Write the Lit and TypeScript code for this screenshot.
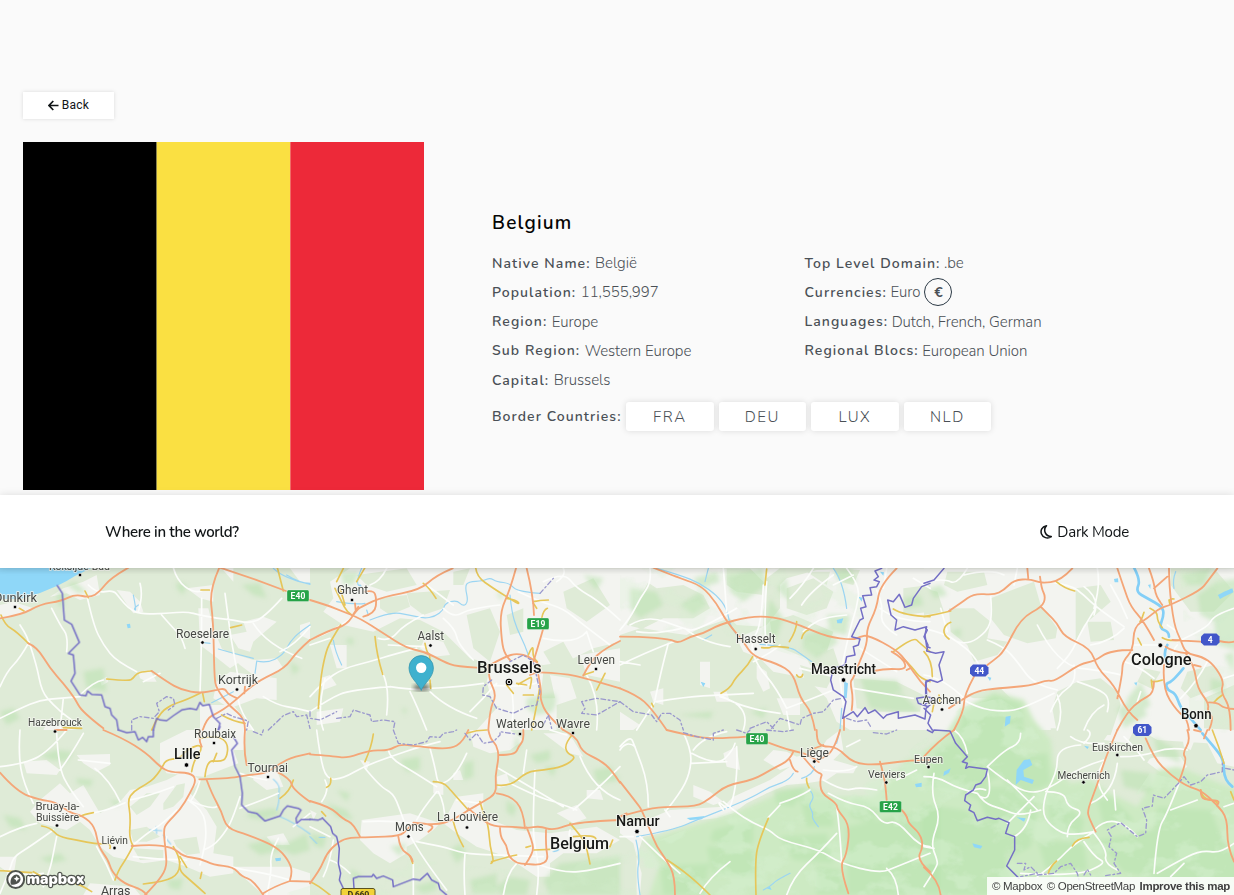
import { LitElement, html, svg, css } from "lit";
import { customElement } from "lit/decorators.js";

type Tile = { x: number; y: number; [layer: string]: any };

// Every tile holds its geometry in thirds of a pixel, measured from its own corner.
const TILES: Tile[] = [
  {
    x: 0, y: -3,
    light: [
      "150,95 190,70 250,50 290,30 300,90 240,105 200,85", "350,75 390,80 420,110 430,140 400,145 375,110",
      "560,70 640,60 640,110 600,100", "595,130 625,130 640,190 665,250 720,290 690,310 640,270 600,240",
      "730,170 790,155 830,170 760,230 750,260 715,250 690,210 740,200", "680,260 760,285 830,280 850,310 790,350 760,330 720,300",
      "650,350 690,320 830,340 830,405 770,400 690,430 640,400", "600,420 700,420 760,495 600,495", "300,345 320,335 325,350 305,362",
      "415,320 450,315 470,350 440,350 420,340", "0,120 40,110 100,130 60,150 0,160", "900,180 930,170 930,225 900,210", "665,10 700,10 700,50",
      "130,495 150,460 180,485 230,495", "870,10 930,10 930,60 900,50",
    ],
    forest: ["170,85 195,75 190,130 175,120", "725,60 780,55 800,100 760,90", "530,50 560,60 550,90 530,70", "250,320 310,310 320,380 260,370", "0,440 40,430 60,460 20,480", "870,290 900,310 880,330", "200,60 225,50 260,80 235,85"],
    water: ["0,8 276,8 225,33 200,48 172,62 120,84 60,102 0,102"],
    lakes: ["380,178 390,176 392,188 383,190"],
    streams: ["400,90 410,140 400,130 415,120", "612,233 630,235", "655,252 700,265 760,280", "770,288 800,295 850,270 870,230 900,200 930,180", "770,290 765,325", "635,413 700,380", "860,30 900,55 930,55", "820,10 850,40 930,58"],
    white: [
      "265,60 290,85 340,75 360,100 385,130 420,148 500,145 560,140 600,150 650,160 700,165 745,175 790,160 845,100", "262,98 280,180 310,240 350,290 410,320", "520,8 530,45 580,85 605,78",
      "485,150 520,190 545,215 555,250", "88,230 60,280 20,320 0,365", "90,240 110,300 125,380 160,420 200,455 230,475", "0,460 60,430 120,405 180,400 240,395", "155,130 180,180 205,215 200,260",
      "420,55 430,90 415,140", "605,100 605,260 600,385", "675,85 690,200 700,260 715,340", "60,180 90,225 85,240", "240,390 280,350 310,345", "760,175 800,240 905,280", "715,405 720,440 760,495", "790,395 830,420 890,430 930,440", "930,185 885,240 840,260", "430,350 480,325", "180,495 190,400",
    ],
    yellow: ["3,150 15,180 50,200 85,235", "58,130 72,138", "255,78 265,98", "832,8 850,78", "603,75 628,75", "692,188 725,180", "320,342 385,348 400,340 410,325 430,320 455,318", "600,385 560,405 510,420 475,450 455,495", "608,385 613,410", "665,450 700,470 735,475", "190,488 245,490"],
    orange: ["0,160 65,150 120,118 185,108 225,88 270,98 300,80 330,40 385,8", "85,235 110,245 150,310 190,355 225,400 245,440 310,490", "658,8 628,75 640,170 643,340 650,372 690,425 735,460 735,495", "660,8 760,40 858,78", "930,225 890,260 855,310 780,345 735,380 690,420 650,445 620,460 608,495", "455,318 500,350 545,375 600,385 650,375 675,370 685,390 712,400", "735,365 733,385"],
    border: ["172,62 187,85 193,165 215,178 238,232 205,265 220,270 225,325 213,348 240,390 258,392 263,378 275,388 305,390 315,425 330,430 335,450 350,465 355,495", "460,495 470,460 480,465 500,467 520,452 545,435 570,430 590,434 600,412 608,422 628,418 640,455 660,475 655,495"],
    dash: ["395,495 395,465 420,455 460,460 478,440 470,415 500,395 520,400 525,420 505,435", "650,460 680,445 700,455 745,468 740,495", "805,495 850,452 880,440 890,455 920,450 930,490"],
  },
  {
    x: 0, y: 162,
    light: [
      "70,95 140,90 180,120 170,135 80,130", "230,75 330,72 330,105 290,125 250,100", "120,210 180,160 210,190 250,165 300,250 360,215 390,180 440,170 500,150 560,120 600,150 570,190 620,240 650,290 640,370 700,380 700,430 630,440 560,410 500,390 430,400 340,380 300,350 270,300 240,275 200,300 120,280 90,245",
      "480,40 560,0 740,0 730,60 700,60 715,100 610,140 500,130 480,100", "760,130 830,120 850,170 800,180 760,150", "690,410 870,410 930,430 930,495 790,495 740,450", "800,320 850,310 870,345 820,345", "0,380 50,380 40,440 0,410", "270,460 400,470 420,495 250,495",
    ],
    farm: ["490,220 530,165 555,160 550,200 520,230 490,240", "390,230 440,190 480,190 450,230 410,255", "520,330 590,320 600,370 560,375 530,350", "390,300 440,290 480,320 440,335 400,335", "400,355 490,360 490,385 420,390"],
    forest: ["120,75 170,60 220,65 200,95 150,90", "230,145 280,150 270,170 230,160", "750,245 820,235 850,250 790,270 740,260", "740,345 800,330 850,345 920,310 930,360 880,375 850,360 780,375", "10,255 60,265 80,300 30,290", "330,210 365,215 350,230", "120,385 180,370 200,390 150,400", "500,450 550,445 540,480 510,475"],
    streams: ["820,148 840,165 835,195 838,215 830,240", "840,260 880,275 930,312", "450,300 485,302", "468,290 470,310", "490,315 512,342"],
    lakes: ["825,385 843,383 842,392 828,394"],
    white: [
      "60,0 55,70 70,160 100,220", "170,10 175,110 210,180 250,230", "200,0 150,60 80,100 0,110", "250,10 210,80 180,120", "330,100 235,90", "285,115 330,150 360,215", "240,255 320,245 375,218", "0,320 60,290 110,280", "160,300 90,350 40,380 30,420 0,490", "170,320 160,370 150,420 130,470", "290,350 320,400 340,450", "400,345 440,310 490,280 530,240", "570,215 610,240 620,310 610,370 600,405", "565,210 630,240 650,230", "720,200 700,260 680,300 640,350 610,360", "600,150 590,190 570,215", "720,130 760,145 800,150", "835,190 790,210 720,235", "835,325 810,370 815,430 800,495", "690,410 730,420 800,430 870,450", "880,290 930,250", "390,210 440,200 520,170", "0,420 80,440 130,430", "400,380 480,390 560,390", "500,320 495,355",
    ],
    yellow: ["490,105 470,140 435,165 400,185 383,210 392,260 387,330 400,348", "490,105 495,90 540,85 555,65 580,50 600,45 605,60 580,95 575,125", "615,140 620,90 660,95 680,85 685,40 650,15 600,25", "640,95 650,70", "125,288 150,292 175,320 230,330 290,343 335,340 330,355", "235,260 255,252 280,248", "398,350 380,385 355,420 345,450", "0,422 95,428", "100,425 160,460 200,455 240,462 275,485", "520,350 540,380 538,430 495,455 430,462", "540,380 560,412", "540,395 535,420 570,450 615,490", "605,427 601,445", "880,150 870,185 840,205"],
    orange: ["0,128 50,185 120,210 165,215 210,248 250,258 285,290 295,350 325,390 335,425 370,460 430,480 440,495", "310,0 370,25 440,70 480,110 510,127 570,128 590,148 570,190 540,240 500,280 490,300 498,370 500,415 470,460 435,495", "598,148 680,146 745,135 800,130 840,100 880,80 930,70", "620,150 635,190 665,245 680,295 745,315 830,350 865,390 878,425 870,450", "395,348 450,343 520,352 550,380 600,385 640,405 700,410 725,440 760,450 790,495", "870,453 930,455", "830,125 870,145 880,180 930,215", "735,0 730,60 740,105", "870,453 820,470 790,490", "600,0 595,30 605,50", "165,0 200,0"],
    border: ["355,0 380,8 405,5 415,30 428,22 440,35 445,20 460,20 460,0", "655,0 660,-10", "700,20 712,40 695,60 705,110 720,140 727,190 725,225 745,245 770,250 795,273 840,258 850,240 862,228 895,235 903,240 888,265 890,280 905,268 930,268"],
    dash: ["760,5 785,15 790,0"],
  },
  {
    x: 310, y: -3,
    light: [
      "60,50 120,10 930,10 930,230 850,250 770,290 700,300 620,290 560,300 480,280 440,240 400,200 330,165 270,160 190,200 100,180 40,140 70,100",
      "345,220 400,230 420,270 370,275 330,250", "540,300 660,260 700,320 690,410 620,440 550,420 530,350", "620,400 740,400 740,495 500,495 560,430", "30,340 60,330 80,360 40,375", "60,240 110,240 110,310 80,310", "20,440 100,430 90,470 20,480", "720,330 780,340 800,400 740,420", "810,270 930,250 930,350 830,330",
    ],
    farm: ["140,30 290,10 320,60 230,80 170,60", "290,85 420,75 400,130 340,150 300,120", "470,150 540,130 570,200 540,290 490,250", "210,100 290,90 300,125 240,150 210,130", "590,150 640,130 640,200 600,210", "760,80 850,40 900,120 830,170 770,130", "700,260 760,230 800,300 730,310", "430,20 480,10 460,60 430,60"],
    forest: ["650,400 700,390 735,385 730,440 680,450 650,430", "720,410 740,395 735,430", "110,220 130,220 130,240 110,235", "560,80 580,90 570,105", "275,430 290,432 285,450", "820,30 880,40 860,75", "90,20 150,20 130,60 100,60"],
    streams: ["155,10 135,55 160,70 150,60", "80,110 140,120 165,115", "180,165 240,140 300,150 340,160 375,155 400,135 405,115 440,105 460,125 475,110 465,65 475,50 520,48 540,38 560,50 600,55 620,80 690,85", "600,90 605,140 620,190 645,240 655,270", "170,135 175,150", "70,225 75,260 95,300"],
    dash2: ["690,85 730,40"],
    white: [
      "205,220 240,230 280,180 340,150", "235,240 345,245", "130,155 70,200 10,220", "0,395 40,350 100,310 180,290 260,265 320,250", "0,440 60,400 120,375 240,365", "215,320 240,360 230,450", "240,365 310,375 360,370 450,365 520,355", "360,380 410,430 500,460", "400,160 435,190 445,240 490,285", "400,130 430,160 480,130 570,120", "430,120 390,90 350,60", "625,80 690,110 760,130 820,180 900,240", "700,50 760,20 800,70 870,110 930,165", "700,220 800,240 830,200", "760,10 770,30 740,50", "45,340 20,440 40,495", "560,355 520,400 480,440", "600,360 620,430 600,495", "540,360 640,370 690,350", "830,330 870,400 860,495", "300,380 320,420 350,495", "60,220 0,240", "180,60 210,50 230,10", "830,200 850,260",
    ],
    yellow: ["75,70 95,110 110,140 125,150", "90,70 105,120", "80,50 100,10", "165,8 140,50", "340,55 358,68 378,100", "497,8 500,35 550,70 585,92 630,120 620,105 590,100", "92,180 60,230 45,270 30,350 25,430", "195,215 200,270 218,328", "345,235 350,262 362,270 358,310", "360,345 362,370", "670,110 690,105 715,105", "695,160 700,135 712,130", "680,130 670,115", "655,270 670,235 668,280 682,290", "625,358 655,340 668,335 660,370", "620,355 650,360", "590,360 610,385", "640,390 670,390", "690,360 685,400 665,495", "820,330 850,320", "885,325 860,375"],
    orange: ["0,105 50,120 100,140 150,160 220,205 290,250 345,260 400,290 440,305 500,308", "0,225 60,195 110,180 140,135 160,122 220,95 330,75 380,30 428,10", "165,80 190,75 200,100 195,145 160,155", "618,10 600,75 570,140 575,230 585,270 600,285", "650,10 670,90 672,150", "700,190 680,260 670,290", "540,300 585,275 620,265 660,275 690,300 690,320 660,330", "535,300 535,340 560,390 540,430 535,495", "690,322 760,325 830,340 930,370", "820,332 840,290 885,250 930,228", "685,330 695,380 690,400 710,450 760,495", "130,148 145,125", "135,115 137,135"],
    border: [],
    dash: ["545,345 520,365 518,390 540,395 560,430 610,445 650,425 680,420 690,380 670,290 640,270 600,290", "80,460 120,455 130,435 180,450 185,470 220,465 255,470 250,495", "815,410 825,430 815,445 860,450 930,410 860,400 815,410", "700,480 715,450 725,490", "0,440 0,460 30,465 80,440"],
  },
  {
    x: 310, y: 162,
    light: ["480,0 560,0 600,0 640,30 600,60 540,70 490,50", "700,10 770,10 790,30 820,80 780,70", "370,160 400,160 400,195 370,190", "430,130 450,120 460,150 430,150", "440,200 520,190 520,260 620,300 720,310 860,290 930,330 860,370 760,370 720,400 720,440 680,440 620,400 560,370 500,350 440,310 400,280", "155,270 300,250 390,280 370,300 330,330 290,350 290,370 240,400 190,370 150,330", "560,140 590,130 600,165 565,175", "740,250 800,225 830,265 790,280", "150,90 180,95 170,120", "830,180 870,180 880,210 830,205", "0,240 20,250 10,270"],
    forest: ["270,90 330,80 330,120 290,125", "460,100 490,90 490,140 460,150", "80,180 120,190 110,215", "50,220 110,240 130,270 80,260", "590,210 620,230 610,260 590,245", "660,75 720,60 720,90 680,100", "700,110 740,110 730,140", "850,120 900,110 930,150 860,160", "120,415 160,440 130,450", "420,360 450,340 470,370 440,400", "310,470 380,450 380,480 340,490", "480,450 560,430 560,490 490,490", "750,400 930,380 930,495 720,495 700,450", "0,310 50,320 40,355 10,345", "560,470 600,440 660,450 650,495 570,495", "240,350 290,340 270,380", "620,10 630,50 610,60"],
    streams: ["730,365 755,360 740,355", "28,322 45,322", "0,320 20,340"],
    white: ["20,0 30,80 50,150 100,145 160,110 240,80 330,50 390,35", "45,150 60,180 35,215", "165,115 210,170 250,190 270,240 295,310 350,400 410,480", "235,60 240,85 310,125 380,170", "380,185 335,240 320,270", "385,185 405,220 405,280", "360,55 375,110 385,170 440,135 470,70", "640,130 650,60", "600,160 680,200 750,220 800,240", "675,120 670,230 670,330 690,420 680,495", "565,115 600,135 760,230", "930,110 850,190 790,240", "810,80 850,180 930,210", "320,335 400,350 460,370 540,375 700,380", "465,370 460,430 465,495", "310,400 310,495", "160,275 230,270 310,280", "70,330 60,400 40,440", "0,290 60,320", "690,405 760,430 850,420 930,400", "580,495 590,430 620,400", "120,430 90,400 60,390", "800,350 770,330 780,300", "440,210 510,220", "720,0 770,15"],
    yellow: ["190,12 185,50 165,95", "50,172 65,165 62,145", "35,245 47,258", "370,155 400,155 430,190 475,240", "430,275 440,315 460,350", "510,215 520,250 535,285 540,350 553,398 543,400", "545,395 600,378 620,375", "560,165 600,170 650,125 700,120 760,110 800,82 770,70 765,40 790,10", "780,280 815,320 830,350 840,402", "790,320 860,312 858,330", "900,350 908,330", "648,352 662,348", "672,360 720,358", "300,378 308,400", "0,455 20,462 60,495", "470,10 500,0 530,0"],
    orange: ["0,73 70,78 110,85 180,60 235,62 270,42 330,50 420,58 460,35 475,0", "535,0 540,25 560,45 567,80 555,140 560,190 520,215 475,240 430,270 380,285 310,278 290,300 270,318 180,322 120,322 85,335 50,370 30,420 0,460", "560,190 600,195 640,240 645,295", "475,235 510,265 550,290 610,290 650,295 690,288 730,302 800,275 930,270", "0,213 60,230 100,268 130,280 150,320", "310,278 350,280 375,292 355,305", "265,320 270,358 305,378 308,395", "570,292 570,320 590,345 595,378 620,400 650,402 690,405 715,390 707,350 708,300", "650,292 668,335 670,370 645,405", "640,0 642,30 625,50 615,75 568,75", "760,0 800,20 815,65 870,90 905,120 930,158"],
    border: ["0,268 25,270 38,265 62,290 68,310 80,320 88,355 85,400 92,430 88,450 100,475", "132,475 130,445 145,440 185,440 190,433 200,445 220,438 248,450 250,470 310,447 330,450 352,430 365,450 385,460 390,478 410,495"],
    dash: ["250,0 265,40 310,45 350,35 360,20 390,22 400,10 430,5 440,0", "465,10 480,30 500,10 520,40 550,35 570,15 570,5 615,12"],
  },
  {
    x: 620, y: -3,
    light: ["0,10 110,10 80,60 60,100 40,140 20,180 60,190 0,210", "50,30 110,10 480,10 440,40 440,80 430,140 430,185 350,180 330,160 240,190 200,210 130,200 70,190 130,160 220,160 270,130 250,90 190,60 110,70", "480,60 500,40 590,15 720,10 930,10 930,495 690,495 650,470 620,400 560,340 460,320 420,280 370,260 350,220 440,180 480,130", "90,380 130,370 130,420 100,410", "280,380 320,380 330,410 290,410", "470,400 540,400 540,450 490,450", "410,300 440,320 450,370 430,380 410,340", "240,290 270,290 270,370 240,360", "0,440 60,480 40,495 0,495"],
    farm: ["320,10 390,10 430,50 430,90 350,80 320,60", "500,70 580,40 640,80 620,130 560,150 500,130", "640,10 720,15 700,60 660,50", "450,170 520,150 640,200 620,260 560,280 460,240", "560,280 640,250 660,310 570,300", "700,340 830,350 910,390 900,440 780,440 710,430", "850,70 930,60 930,140 850,150", "540,300 640,330 620,370 560,360", "560,20 630,20 620,60"],
    forest: ["30,70 110,80 130,120 60,160 30,130", "180,120 240,80 260,120 220,150", "450,100 490,160 470,220 430,210", "320,30 430,10 440,60 370,110 330,80", "550,210 620,190 655,230 590,280 550,250", "620,150 690,150 680,210 630,200", "720,340 830,345 850,380 740,390", "850,100 900,90 910,120 860,130", "730,370 850,390 900,440 830,440 750,430", "220,40 290,20 300,50 240,70", "640,20 690,10 710,50 660,50", "470,70 500,40 510,110", "170,450 280,440 270,460", "390,440 440,430 430,460"],
    streams: ["110,10 180,30 240,55 290,90 320,130 330,180 350,210 360,225", "265,10 255,50", "420,238 510,245 540,265 575,290", "640,10 670,50 680,130", "250,225 275,210", "665,430 660,495", "675,350 678,390"],
    lakes: ["650,165 670,160 665,175 652,175", "242,350 256,355 250,366", "673,350 684,355 680,400 672,398", "780,20 792,22 790,32", "715,95 728,98 725,110"],
    white: ["90,10 95,50 60,100 30,160 0,195", "30,180 80,150 190,190 230,200 350,130", "185,190 100,210 50,200", "195,190 240,230 330,245", "0,300 70,265 160,230", "145,235 120,330 105,405", "110,410 200,395 300,390 400,385", "300,390 360,430 480,445", "105,410 50,495", "310,10 320,140", "440,50 430,200 440,240", "430,60 425,180 390,235 410,300 470,370 500,430", "500,430 580,400 640,375", "545,120 570,80 640,30", "550,200 570,180 620,155 680,150", "680,10 720,60 710,130 690,190 660,330", "770,75 790,120 780,180 830,210", "780,130 830,170 930,170", "640,60 700,30", "480,240 460,260 400,290", "540,310 640,335", "700,370 760,380 880,400", "720,250 800,300 830,320", "660,340 670,420", "370,495 395,420 300,395", "500,440 510,495", "800,10 790,70", "0,290 60,300", "880,40 930,70", "510,100 550,60 580,10"],
    yellow: ["440,12 435,60", "530,170 530,195 508,230", "565,195 550,200 545,220", "425,248 450,250 455,242 505,248", "398,275 385,300 345,340 330,370 303,385", "530,330 535,338 548,335 548,328", "820,132 850,152 930,155", "820,260 880,215 900,235 930,260", "850,280 880,310 900,340 930,350", "95,415 100,425"],
    orange: ["100,8 180,40 245,62 290,115 320,170 370,230 400,275 470,295 520,325 540,400 575,440 585,495", "0,215 60,215 150,222 175,235 210,215 250,205 300,178 385,155 460,155 540,180 620,215 700,225 720,215 745,210 830,255 860,290 900,350 930,380", "830,10 780,60 770,130 740,190 742,235 715,300 700,340 690,350 700,400 695,435", "815,260 850,280 860,315 800,310 760,318", "0,370 50,390 95,430 140,495", "860,315 870,310", "672,455 672,495"],
    border: ["785,10 765,18 775,35 762,45 778,50 770,65 750,68 755,90 728,92 738,125 722,130 730,160 720,165 695,215 720,222 715,240 700,245 705,270 680,275 675,300 640,310 632,345 640,375 670,395 678,410 668,460 700,440 712,455 735,428 745,445 765,435 790,460 800,450 835,440 835,460 885,450 915,462 918,430 930,420", "930,55 905,65 880,100 875,120 855,127 838,88 820,110 803,105 813,150 830,165 825,195 850,185 885,195 920,185 915,210 920,245 930,248", "930,345 918,348 920,395 890,400 895,415 925,425"],
    dash: ["0,410 40,440 95,450 110,470 125,445 150,445 180,465 190,495", "455,490 480,460 510,470 540,480 545,460 580,445 610,440 640,405 665,400", "680,460 710,470 740,465 755,490", "390,490 440,470 460,490"],
  },
  {
    x: 620, y: 162,
    light: ["430,90 460,60 500,65 530,80 600,60 620,30 660,0 670,60 640,90 710,110 700,130 650,130 620,150 560,160 500,165 440,190 380,220 340,250 290,265 240,270 120,310 70,320 50,380 40,340 0,310 0,280 80,270 150,240 310,230 340,200 450,150 510,110 480,120", "220,165 270,185 310,215 280,225 220,200", "310,70 350,50 360,120 320,110", "790,150 830,155 810,190 780,180", "640,200 660,230 650,270 640,250", "780,270 830,260 840,290 780,300", "50,380 65,430 60,495 50,495"],
    forestBase: ["110,320 340,250 500,180 560,170 640,200 760,200 800,160 860,90 960,60 960,520 80,520 120,400 70,330"],
    forest: ["280,300 400,270 400,340 320,350 270,330", "540,200 640,210 640,290 560,290", "480,320 620,310 640,400 520,390", "680,290 960,230 960,495 680,495", "460,180 560,170 520,230 470,220", "120,410 270,400 250,495 130,495", "260,350 400,360 410,440 280,440", "590,410 660,420 680,495 590,495", "700,200 780,230 760,280 690,260"],
    streams: ["60,495 50,430 60,380 48,330", "50,320 160,300 230,270 320,235 400,200 450,170 510,150 520,130", "545,145 580,135 583,110", "660,0 650,40", "570,180 585,200 565,225 580,250 575,265 595,290", "430,480 450,470 470,450 510,430"],
    lakes: ["885,162 905,158 905,170 888,172", "200,264 255,258 245,268 210,270", "440,475 450,470 455,480"],
    white: ["0,50 30,15 45,50 85,160 85,230", "45,50 20,30 0,60", "190,8 215,60 210,130 180,190 140,240", "215,70 290,110 340,60 345,40", "215,100 320,95", "220,60 250,20 320,5", "310,215 345,245 400,280 450,300 480,330 600,360 660,400 780,430 830,410 930,370", "350,50 355,170 330,230", "480,225 445,262", "480,220 540,200 570,180", "650,310 600,365 520,440 500,495", "610,150 670,185 720,170 770,180", "625,190 680,220 750,230 790,285 830,270 900,350 930,350", "650,230 660,300 665,400", "330,395 270,440 240,490", "610,120 680,130 710,110", "800,415 830,440 835,495", "135,240 150,260", "320,235 280,200 310,240", "720,30 680,50", "890,120 830,150", "60,320 120,380 180,430", "0,320 40,320"],
    yellow: ["560,145 558,155 567,173", "445,265 415,335 405,400 408,495", "142,390 180,415 235,460 270,495"],
    orange: ["140,0 200,15 280,28 380,20", "445,38 490,55 530,65 570,75 600,100 590,90 640,70 660,0", "590,0 590,30 605,50 650,50 700,100 770,105 870,90 930,90", "0,260 65,240 130,230 230,230 270,205 320,165 400,150 460,115 510,90 520,65", "510,90 520,125 533,125", "545,75 585,125 608,132 600,145 603,190 650,220 652,240 690,285 680,375 658,410 685,490", "780,95 790,130 797,170 800,210", "845,240 860,255 865,280 900,310 910,350 890,390 930,425", "0,155 55,225 65,240 90,300 110,350 140,390 165,440 165,495", "610,45 570,60", "0,260 20,250"],
    border: [],
    dash: ["190,8 230,20 280,30 280,10 310,0", "350,0 380,10 390,0", "440,0 490,5 520,0", "760,8 800,12 830,0"],
  },
  {
    x: 924, y: -3,
    light: ["0,10 930,10 930,495 0,495"],
    farm: ["200,100 330,50 350,120 400,190 395,220 310,235 240,210 200,160", "75,130 150,130 200,170 190,220 250,230 220,270 150,290 130,240 80,200", "455,70 530,60 560,110 480,180 455,230", "490,170 560,170 570,225 500,230", "70,20 180,20 190,60 100,80 60,60", "385,430 400,380 460,350 530,340 580,380 590,420 560,510 400,510", "120,390 230,370 260,400 150,400", "740,10 870,10 930,80 870,140 800,140 740,60", "660,310 710,320 680,370 640,350", "790,320 870,300 900,360 800,400 770,370", "840,400 930,360 930,495 840,490", "0,70 40,80 60,140 0,150"],
    forest: ["820,90 880,50 950,40 950,260 880,240 870,170 830,150", "610,400 650,350 680,420 640,450 600,470", "860,340 900,350 900,390 860,380", "770,30 860,10 840,60 790,60", "15,70 50,60 70,90 30,100", "580,430 640,400 670,450 600,490", "900,270 930,260 930,320", "80,200 110,190 110,220"],
    lakes: ["570,42 582,40 583,52 572,52", "672,60 680,58 679,72", "190,335 202,338 198,348", "245,455 260,452 258,475 242,485", "630,353 640,352 637,362", "882,90 900,80 925,70 928,82 900,95 888,102"],
    rivers: ["630,8 650,45 635,80 670,100 715,125 720,150 705,190 735,200 735,215", "730,240 715,270 730,290", "778,310 745,350 725,355 730,375 755,385 770,430 800,460 830,495"],
    streams: ["755,20 745,45 750,70"],
    white: ["0,50 60,40 100,60 130,10", "120,30 200,10 240,30", "200,95 205,150 190,200 130,240 100,230", "0,190 60,205 100,230 150,270 165,300", "190,225 240,245 280,290 330,360 400,375", "280,10 270,60", "370,50 440,60 480,90 520,130 600,185", "515,130 470,200 440,270 400,310", "480,65 530,100 510,150", "520,10 530,60 510,130", "450,300 460,350 400,390 380,440", "460,350 520,370 560,400 550,440", "470,310 560,320 590,330", "600,190 560,230 500,240", "630,240 700,240", "760,230 850,190 870,150 930,130", "720,300 680,290 620,270", "560,60 590,110 610,160", "730,180 760,200", "110,400 160,430 240,440 300,430 390,385", "0,330 60,340 120,400", "850,290 820,350 770,400", "400,390 420,440 400,495", "760,240 740,260 750,290", "650,380 640,410", "540,420 500,440 480,495", "690,340 640,300 600,290", "900,340 930,330", "50,130 70,200", "340,180 400,300 470,310"],
    yellow: ["0,155 40,148 80,138", "80,172 62,180 58,210 75,222", "397,50 420,70 452,78", "678,130 700,140 700,170 715,188", "735,105 740,125 733,100 750,102", "660,142 655,160 648,170", "642,220 652,240", "715,218 735,230 770,225", "0,260 25,285 25,335", "685,350 700,350 715,345", "895,390 880,400 870,412", "25,440 30,415", "45,390 48,410", "682,345 685,370"],
    orange: ["75,138 110,115 150,85 210,90 240,75 270,45 320,42 350,55 410,48 445,10", "310,10 313,42", "348,35 352,70 365,95 355,125 290,160 240,260 210,285 190,300", "150,335 120,390 120,440 90,495", "350,125 370,145 400,175 420,215 500,250 520,310 570,360 610,440 640,465", "75,430 120,400 160,378 220,370 320,362 370,345 390,350 470,295 510,290 560,255 625,255", "580,10 600,70 620,125 660,170 690,225", "735,10 735,60 750,180 770,225 785,265 835,275 870,300 900,350 890,380 920,430 920,495", "880,10 850,50 830,75 740,120 705,130 670,160 630,185 627,255 595,290 595,330 580,400", "675,10 690,50 695,95 715,120", "730,35 690,70", "745,225 830,230", "885,228 915,235 930,230", "725,245 745,260 790,265", "720,300 715,370 760,440 790,460 795,495", "785,265 810,300 820,370 855,415 850,440 870,460 855,495", "580,495 610,440 650,405 690,385 690,350", "855,412 880,412 900,430 930,432", "810,300 830,305"],
    border: ["60,10 30,45 0,55", "5,190 10,195 0,215 12,240 8,258 35,265 60,260 45,300 55,345 40,352 20,345 5,352 5,395 30,400 0,420", "0,430 20,450 12,475 25,495"],
    dash: [],
  },
  {
    x: 924, y: 162,
    light: ["660,90 700,80 770,80 790,110 740,150 700,120", "560,0 630,0 610,40 540,30", "415,170 440,165 440,215 415,205", "640,-5 930,-5 930,110 880,100 850,40 700,30", "820,190 880,190 880,220 820,220", "770,0 820,10 800,60 780,50", "0,100 40,95 50,150 20,160"],
    forestBase: ["-10,70 60,20 110,-60 210,-115 300,-90 330,-30 380,30 390,110 440,160 500,150 560,190 640,230 690,150 700,120 760,110 900,165 950,180 950,520 -10,520"],
    farm: ["380,-5 480,-5 560,50 560,110 640,120 690,200 640,230 560,190 500,150 440,160 390,110", "560,70 690,70 660,110 600,120", "800,110 900,160 910,210 800,180"],
    forest: ["40,60 90,40 120,-50 210,-105 290,-80 300,0 260,130 200,150 160,210 100,180 0,170", "220,80 370,70 380,160 340,180 240,160", "150,170 320,170 340,250 320,350 260,380 180,250", "-10,220 120,240 240,300 250,420 280,495 60,495 -10,400", "370,190 420,220 480,270 470,320 380,310", "520,210 560,200 630,270 540,290", "590,120 680,130 680,190 600,170", "700,230 860,240 900,340 950,400 950,520 700,520 680,380", "340,330 480,340 490,420 370,430", "690,20 760,60 770,100 700,70", "520,330 580,320 690,300 690,440 600,430", "800,320 900,330 900,380 820,380", "400,240 430,260 420,290"],
    lakes: ["278,120 300,90 318,88 325,105 298,120 300,140 330,150 325,162 290,150 275,165", "278,262 305,265 300,275", "145,340 175,348 170,356 150,352", "480,47 495,50 490,57", "60,125 80,115 75,128 58,138"],
    rivers: ["835,10 870,50 900,90 900,150 925,170"],
    streams: [],
    white: ["0,140 40,140 100,175 160,190", "30,130 20,190 50,260 20,340 40,390 40,410 0,470", "90,0 120,20 130,70", "190,110 240,60 290,40 290,10", "190,110 240,150 310,190 370,180 470,110 540,90", "370,180 350,240 380,290 440,320 510,305", "365,185 420,185 430,230 480,245 430,285 430,320", "480,40 510,10 490,0", "470,45 400,50 400,130 370,180", "540,40 470,45 440,20", "160,190 180,220 230,235 290,260 350,240", "330,200 300,230 250,280", "320,240 310,300 270,320", "510,305 450,340 400,395 340,440", "510,310 550,360 540,400 580,420", "480,335 510,380 550,400 450,440 290,430", "510,300 570,240 640,320", "570,180 575,240", "580,100 570,190 500,220", "590,80 650,80 740,50 790,60", "765,160 730,250 700,300 690,430", "820,210 740,240", "700,430 750,400 830,360 890,370 930,340", "900,230 930,220", "540,95 500,150 550,210", "190,120 210,220 170,200", "660,90 640,60 600,20", "740,440 780,400", "130,190 160,170 185,180", "0,350 30,355", "250,150 340,240"],
    yellow: ["445,348 455,325 495,322", "373,430 378,410 398,393", "830,180 835,208 885,212 880,228", "920,185 930,210", "865,0 885,50 900,100"],
    orange: ["90,0 40,35 0,80", "580,0 545,80 520,165 490,240 495,265 515,305", "665,25 690,85 740,135 790,170 830,180 880,225 910,265 910,350 930,395", "765,155 790,90 775,70 800,30 790,0", "0,412 45,450 50,495", "830,180 830,205 855,210 890,212 880,225", "840,25 850,0", "810,0 830,5"],
    border: ["10,0 25,8 30,0 78,3 95,40 130,80 115,95 130,100 125,115 135,110 190,118 185,140 170,160 155,165 148,180 125,195 122,212 140,225 135,240 150,248 160,272 190,262 215,268 225,265 255,278 245,310 272,320 272,360 248,408 285,445"],
    dash: ["545,437 590,430 570,400 578,370 555,350 562,320 550,300 590,278 640,320 665,310 668,270 655,235 685,228 688,195 720,205 765,158 780,140 800,165 830,155 850,135 895,125 895,95", "280,400 305,400 300,420 320,410 340,430 290,440", "340,435 390,430 410,410 440,400 460,430 465,450", "480,435 490,418 500,435", "905,115 930,120"],
  },
];

// name, left, baseline, width, size, heavy, dot x, dot y
const TOWNS: [string, number, number, number, number, number, number, number][] = [
  ["Koksijde-Bad", 49, 570, 61, 11, 0, 80, 575], ["Dunkirk", -6, 602, 43, 12, 0, 15, 607], ["Roeselare", 176, 637.5, 53, 12, 0, 202.5, 642.5],
  ["Kortrijk", 218, 684, 40, 12, 0, 237, 689.5], ["Hazebrouck", 28, 726, 54, 11, 0, 55, 731.5], ["Ghent", 337, 594, 31, 12, 0, 352, 600],
  ["Aalst", 417.5, 640, 26.5, 12, 0, 430.5, 645.5], ["Brussels", 477, 673, 64.5, 16, 1, -9, -9], ["Leuven", 577.5, 664, 37.5, 12, 0, 596, 669],
  ["Hasselt", 736, 643, 39.5, 12, 0, 755.7, 649], ["Maastricht", 811, 673.5, 65, 14, 1, 843.5, 680], ["Aachen", 922.5, 704, 38.5, 12, 0, 942, 709.5],
  ["Cologne", 1131, 665, 60.5, 16, 1, 1160.3, 645.3], ["Bonn", 1181, 719, 30.5, 14, 1, 1196, 725.7], ["Waterloo", 496, 728, 48, 12, 0, 520, 734],
  ["Wavre", 556, 728, 34, 12, 0, 573, 733], ["Roubaix", 194, 738, 42, 12, 0, 214, 743], ["Lille", 174, 758.5, 26.5, 14, 1, 186.5, 765],
  ["Tournai", 247.5, 772, 40.5, 12, 0, 268, 777], ["Bruay-la-", 35.5, 809.5, 44, 11, 0, -9, -9], ["Buissière", 36, 821, 43, 11, 0, 57, 825.5],
  ["Liévin", 101.5, 843.5, 26.5, 11, 0, 114.5, 848], ["Arras", 101, 895, 29.5, 12, 0, -9, -9], ["Mons", 395, 831, 28.5, 12, 0, 408.5, 836.5],
  ["La Louvière", 437, 821, 61, 12, 0, 467, 827.5], ["Belgium", 550, 848.5, 59, 16, 1, -9, -9], ["Namur", 616, 826, 43.5, 14, 1, 637, 831.5],
  ["Liège", 800, 756.5, 29, 12, 0, 814.3, 761.5], ["Verviers", 868, 777.5, 37.5, 11, 0, 886.3, 782.5], ["Eupen", 914, 763, 29, 11, 0, 928.5, 767],
  ["Euskirchen", 1092, 751, 51, 11, 0, 1117.3, 755], ["Mechernich", 1057.5, 778.5, 52.5, 11, 0, 1083.5, 782.3],
];

const E_ROADS: [string, number, number][] = [["E40", 287, 590], ["E19", 527, 618], ["E40", 746, 733], ["E42", 879.5, 801]];
const AUTOBAHNS: [string, number, number][] = [["44", 970, 664], ["4", 1201, 633], ["61", 1133, 723.5]];

const line = (pts: string) => "M" + pts.split(" ").join("L");

// Rounds the corners of a polyline with quadratic segments through its midpoints.
const curve = (pts: string) => {
  const p = pts.split(" ").map((s) => s.split(",").map(Number));
  if (p.length < 3) return line(pts);
  let d = `M${p[0]}`;
  for (let i = 1; i < p.length - 1; i++) {
    const end = i === p.length - 2 ? p[i + 1] : [(p[i][0] + p[i + 1][0]) / 2, (p[i][1] + p[i + 1][1]) / 2];
    d += `Q${p[i]} ${end}`;
  }
  return d;
};

const layer = (name: string, shape: (pts: string) => string) =>
  svg`<g class=${name}>${TILES.map((t) =>
    t[name]?.length ? svg`<path transform="translate(${t.x} ${t.y}) scale(.33333)" d=${t[name].map(shape).join("")}></path>` : null
  )}</g>`;
const area = (pts: string) => line(pts) + "Z";

@customElement("country-map")
class CountryMap extends LitElement {
  static styles = css`
    :host { display: block; position: relative; height: 327px; overflow: hidden; background: #dfebd7; font-family: Roboto, sans-serif; }
    .map { display: block; }
    path { fill: none; stroke-linejoin: round; stroke-linecap: round; }
    .light path { fill: #f3f4f0; }
    .farm path { fill: #dfebd7; }
    .forestBase path { fill: #cdeac3; }
    .forest path { fill: #b6e2ac; opacity: .5; }
    .water path, .lakes path { fill: #8fd7f8; }
    .streams path { stroke: #9bd5f2; stroke-width: 3.6; }
    .rivers path { stroke: #83cff7; stroke-width: 8; }
    .white path { stroke: #fcfdfb; stroke-width: 5; }
    .yellow path { stroke: #e6c659; stroke-width: 5; }
    .orange path { stroke: #f4a678; stroke-width: 5.5; }
    .border path { stroke: #746fc5; stroke-width: 4.5; }
    .dash path, .dash2 path { stroke: #9a98cd; stroke-width: 4; stroke-dasharray: 14 8 5 8; }
    .woods { fill: #000; }
    .town { fill: #454744; stroke: #f5f7f2; stroke-width: 2px; stroke-opacity: .75; paint-order: stroke; stroke-linejoin: round; }
    .heavy { fill: #171817; font-weight: 500; }
    .dot { fill: #000; stroke: #fff; stroke-width: .8; stroke-opacity: .7; }
    .shield { fill: #fff; font-size: 8.5px; font-weight: 700; text-anchor: middle; }
    .brand { font: 900 15px Nunito, Lato, sans-serif; fill: #fff; stroke: #4f534e; stroke-width: 2.6px; paint-order: stroke; stroke-linejoin: round; }
    .credit { position: absolute; right: 0; bottom: 0; box-sizing: border-box; display: flex; justify-content: space-between; width: 247px; height: 18px; padding: 0 4px 0 5px; line-height: 18px; font-family: "Liberation Sans", sans-serif; font-size: 11.5px; letter-spacing: -.3px; color: #404040; background: rgba(255, 255, 255, .85); white-space: nowrap; }
    .credit b { font-size: 11.5px; letter-spacing: -.3px; }
  `;

  render() {
    return html`
      <svg class="map" width="1234" height="327" viewBox="0 0 1234 327">
        <defs>
          <filter id="woods" x="0" y="0" width="100%" height="100%">
            <feTurbulence type="fractalNoise" baseFrequency=".028 .04" numOctaves="4" seed="11"></feTurbulence>
            <feColorMatrix values="0 0 0 0 .67  0 0 0 0 .87  0 0 0 0 .63  0 7 0 0 -3.5"></feColorMatrix>
            <feComposite in2="SourceGraphic" operator="in"></feComposite>
          </filter>
          <filter id="soft"><feGaussianBlur stdDeviation="2"></feGaussianBlur></filter>
          <linearGradient id="shade" x1="0" y1="0" x2="0" y2="1">
            <stop offset="0" stop-opacity=".07"></stop><stop offset="1" stop-opacity="0"></stop>
          </linearGradient>
        </defs>
        ${layer("light", area)}${layer("farm", area)}
        <g filter="url(#soft)">${layer("forestBase", area)}${layer("forest", area)}</g>
        <path class="woods" opacity=".5" filter="url(#woods)" d="M640 280L740 240L860 215L925 170L960 140L1000 130L1030 150L1050 190L1070 215L1130 235L1150 205L1234 225V327H640Z"></path>
        <path class="woods" opacity=".25" filter="url(#woods)" d="M280 327L400 290L540 305L640 280L700 327ZM620 0H860V110L740 70L620 60ZM1180 0H1234V170L1190 150Z"></path>
        ${layer("water", area)}${layer("lakes", area)}${layer("streams", curve)}${layer("rivers", curve)}
        ${layer("white", curve)}${layer("yellow", curve)}${layer("orange", curve)}
        ${layer("dash", line)}${layer("dash2", line)}${layer("border", line)}
        ${E_ROADS.map(([n, x, y]) => svg`<g transform="translate(${x} ${y - 568})">
          <rect width="22" height="11.5" rx="1.5" fill="#27a348" stroke="#fff" stroke-opacity=".5" stroke-width=".6"></rect>
          <text class="shield" x="11" y="9" textLength="15">${n}</text></g>`)}
        ${AUTOBAHNS.map(([n, x, y]) => svg`<g transform="translate(${x} ${y - 568})">
          <path d="M3 .5H15.5L18.5 3.5V9.5L15.5 12.5H3L0 9.5V3.5Z" style="fill:#4257c9"></path>
          <text class="shield" x="9.3" y="9.6">${n}</text></g>`)}
        <rect x="341" y="320.5" width="34" height="12" rx="2" fill="#f1d237" stroke="#5b5220"></rect>
        <text x="347.5" y="330" font-size="9" font-weight="700" textLength="22" fill="#403a18">D 669</text>
        ${TOWNS.map(([name, x, y, w, size, heavy, dx, dy]) => svg`
          ${dx > 0 ? svg`<circle class="dot" cx=${dx} cy=${dy - 568} r=${heavy ? 2.2 : 1.7}></circle>` : null}
          <text class=${heavy ? "town heavy" : "town"} x=${x} y=${y - 568} font-size=${size} textLength=${w} lengthAdjust="spacingAndGlyphs">${name}</text>`)}
        <circle cx="509" cy="114" r="2.8" fill="#fff" stroke="#000" stroke-width="1.1"></circle><circle cx="509" cy="114" r="1.3"></circle>
        <ellipse cx="421.5" cy="119.5" rx="8.5" ry="3.5" opacity=".5" filter="url(#soft)"></ellipse>
        <path d="M421.200 122C418 115 409 109.500 409 99.800A12.200 12.200 0 0 1 433.400 99.800C433.400 109.500 424.400 115 421.200 122Z" style="fill:#3fb1ce;stroke:#3496ae;stroke-width:.8"></path>
        <circle cx="421.200" cy="99.800" r="5.200" fill="#fff"></circle>
        <g transform="translate(15.700 311.500)">
          <circle r="8.400" fill="#fff" stroke="#4f534e" stroke-width="2"></circle>
          <path d="M-4.900 4.900C-6.200-1-2.500-5.300 1.200-5A4.700 4.700 0 0 1 3.600 2.800C1.200 5.300-2.500 5.400-4.900 4.900Z" style="fill:#4f534e"></path>
          <path d="M1-3.600L2 -1.700L4 -.700L2 .300L1 2.200L0 .300L-2 -.700L0-1.700Z" style="fill:#fff"></path>
        </g>
        <text class="brand" x="26.500" y="316" textLength="58" lengthAdjust="spacingAndGlyphs">mapbox</text>
        <rect width="1234" height="7" fill="url(#shade)"></rect>
      </svg>
      <div class="credit"><span>© Mapbox</span><span>© OpenStreetMap</span><b>Improve this map</b></div>
    `;
  }
}

@customElement("app-root")
class AppRoot extends LitElement {
  static styles = css`
    :host { display: flex; flex-direction: column; height: 895px; overflow: hidden; background: #fafafa; color: #4a5056; font-family: Nunito, Lato, "Open Sans", sans-serif; font-size: 15px; }
    .page { height: 495px; box-sizing: border-box; padding: 91.500px 23px 0; }
    .back { display: flex; align-items: center; justify-content: center; gap: 3px; width: 91px; height: 27px; background: #fff; box-shadow: 0 0 4px rgba(0, 0, 0, .13); color: #111517; font: 12px Roboto, sans-serif; letter-spacing: .25px; }
    .country { display: flex; align-items: flex-start; margin-top: 23px; }
    .flag { display: block; width: 401px; height: 348px; flex: none; }
    .info { margin: 67px 0 0 68px; width: 640px; }
    .name { margin: 0 0 12px; font-size: 19px; line-height: 28px; font-weight: 650; letter-spacing: 1.200px; color: #050505; }
    .columns { display: grid; grid-template-columns: 312.500px 1fr; }
    .row { display: flex; align-items: center; height: 29.250px; white-space: nowrap; font-weight: 300; gap: 5px; }
    .right .row { gap: 4px; }
    .label { font-size: 14px; font-weight: 650; letter-spacing: 1.060px; margin-right: -.5px; }
    .value { letter-spacing: -.06px; }
    .coin { box-sizing: border-box; display: grid; place-items: center; width: 28px; height: 28px; border: 1px solid #2b3945; border-radius: 50%; font-weight: 700; font-size: 14px; }
    .borders { display: flex; align-items: center; gap: 5px; margin-top: 7.500px; height: 29px; }
    .chip { display: grid; place-items: center; width: 87.500px; height: 29px; border-radius: 3px; background: #fff; box-shadow: 0 0 6px rgba(0, 0, 0, .13); font-weight: 300; letter-spacing: 1.600px; }
    .bar { position: relative; z-index: 1; flex: none; box-sizing: border-box; display: flex; align-items: center; justify-content: space-between; height: 73px; padding: 0 105px; background: #fff; box-shadow: 0 0 8px rgba(0, 0, 0, .12); color: #111517; }
    .title { font-size: 15px; font-weight: 600; letter-spacing: -.370px; }
    .mode { display: flex; align-items: center; gap: 5px; font-size: 15px; letter-spacing: -.220px; }
  `;

  private row(label: string, value: string, coin = "") {
    return html`<div class="row"><span class="label">${label}:</span><span class="value">${value}</span>${coin ? html`<span class="coin">${coin}</span>` : null}</div>`;
  }

  render() {
    return html`
      <main class="page">
        <div class="back">
          <svg width="11" height="11" viewBox="0 0 11 11" fill="none" stroke="#111517" stroke-width="1.700"><path d="M5.300 1L1 5.500L5.300 10M1 5.500H10.500"></path></svg>
          Back
        </div>
        <section class="country">
          <svg class="flag" viewBox="0 0 3 2" preserveAspectRatio="none"><path d="M0 0H1V2H0Z"></path><path fill="#fae042" d="M1 0H2V2H1Z"></path><path fill="#ed2939" d="M2 0H3V2H2Z"></path></svg>
          <div class="info">
            <h1 class="name">Belgium</h1>
            <div class="columns">
              <div>
                ${this.row("Native Name", "België")}${this.row("Population", "11,555,997")}${this.row("Region", "Europe")}
                ${this.row("Sub Region", "Western Europe")}${this.row("Capital", "Brussels")}
              </div>
              <div class="right">
                ${this.row("Top Level Domain", ".be")}${this.row("Currencies", "Euro", "€")}
                ${this.row("Languages", "Dutch, French, German")}${this.row("Regional Blocs", "European Union")}
              </div>
            </div>
            <div class="borders"><span class="label">Border Countries:</span>${["FRA", "DEU", "LUX", "NLD"].map((c) => html`<span class="chip">${c}</span>`)}</div>
          </div>
        </section>
      </main>
      <header class="bar">
        <div class="title">Where in the world?</div>
        <div class="mode">
          <svg width="12" height="14" viewBox="0 0 12 14"><path d="M6.500 .8C1.800 1.800 .2 5.500 1.500 9C2.800 12.600 7.500 14.200 11.400 11.600C5.200 11.500 2.800 4.800 6.500 .8Z" fill="none" stroke="#111517" stroke-width="1.500" stroke-linejoin="round"></path></svg>
          Dark Mode
        </div>
      </header>
      <country-map></country-map>
    `;
  }
}
